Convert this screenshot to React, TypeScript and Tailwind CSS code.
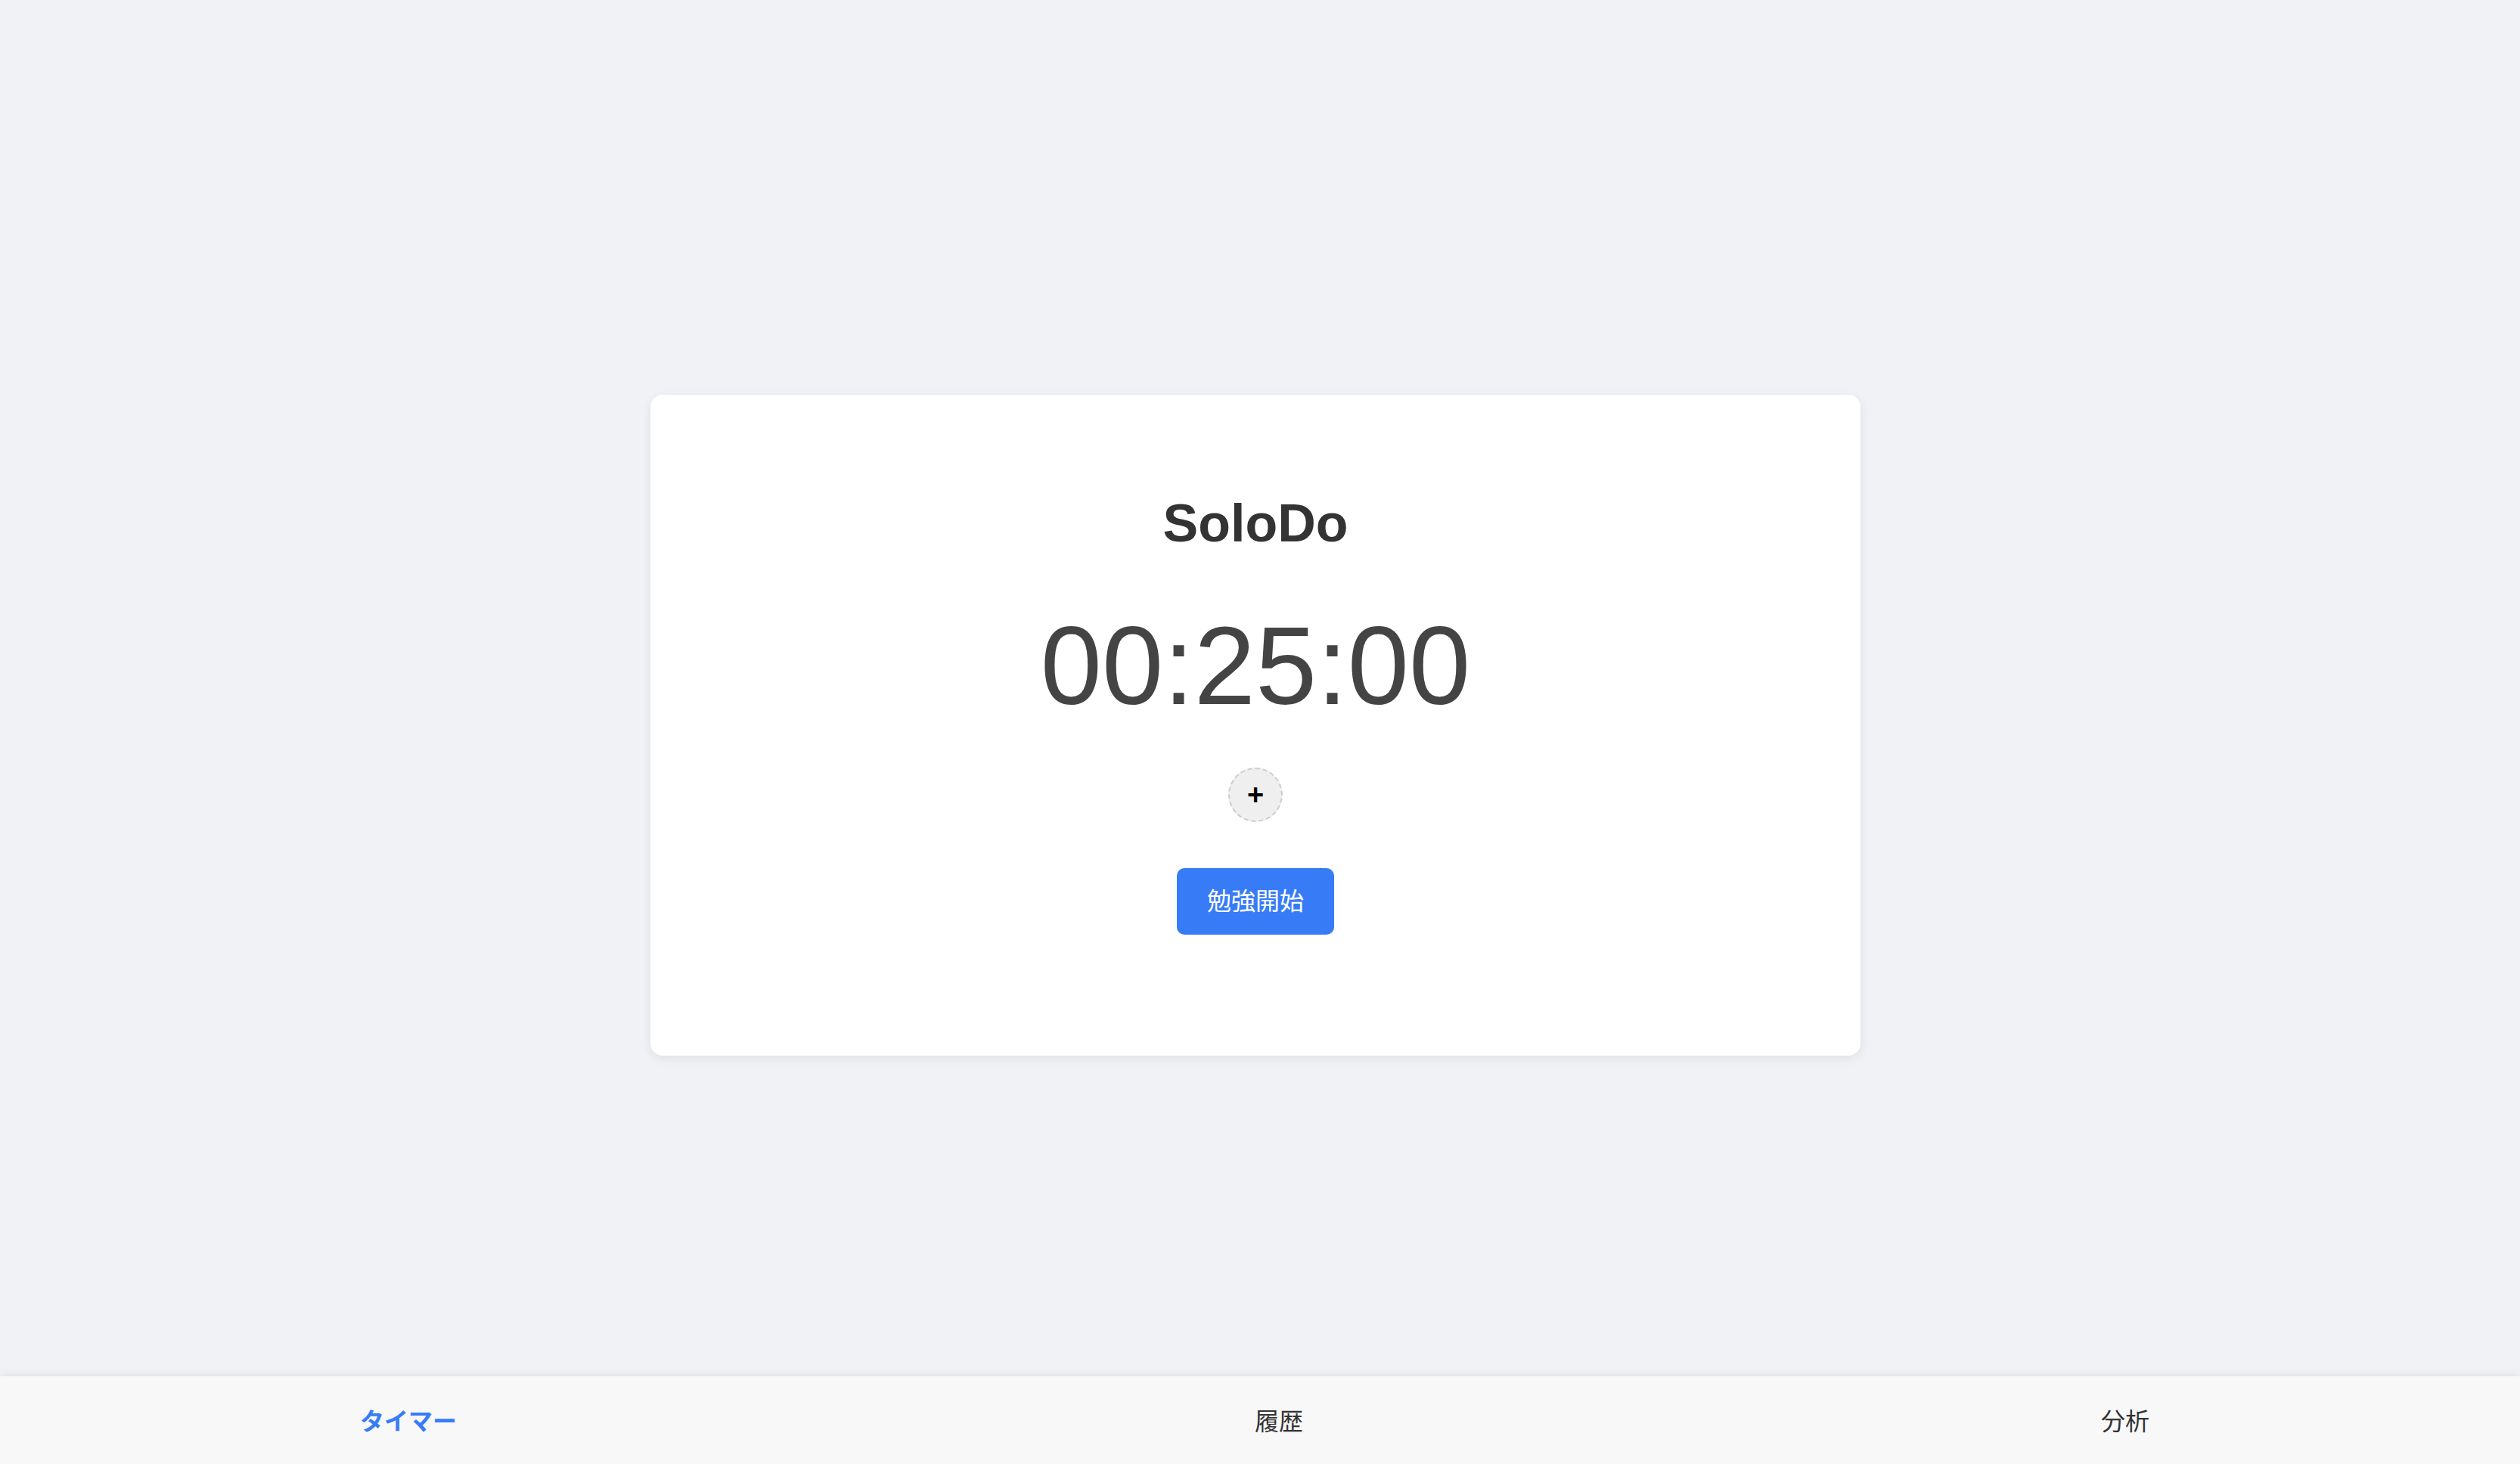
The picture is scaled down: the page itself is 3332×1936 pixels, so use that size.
import { useState } from "react";

const tabs = ["タイマー", "履歴", "分析"];

export default function App() {
  const [active, setActive] = useState(0);
  const [minutes] = useState(25);

  const time = `00:${String(minutes).padStart(2, "0")}:00`;

  return (
    <div
      className="flex h-screen flex-col bg-[#f0f2f5]"
      style={{ fontFamily: '"Liberation Sans", "Noto Sans CJK JP", sans-serif' }}
    >
      <main className="flex flex-1 justify-center pr-[12px] pt-[522px]">
        {/* タイマーカード */}
        <div className="flex h-fit w-[1600px] flex-col items-center rounded-[16px] bg-white pt-[80px] pb-[160px] shadow-[0_4px_14px_rgba(0,0,0,0.08)]">
          <h1 className="mt-[48px] text-[70px] leading-[84px] font-bold text-[#333]">
            SoloDo
          </h1>
          <div className="mt-[74px] text-[146px] leading-none text-[#444]">
            {time}
          </div>
          <button
            type="button"
            className="mt-[61px] flex h-[72px] w-[72px] items-center justify-center rounded-full border-2 border-dashed border-[#cccccc] bg-[#efefef] text-[38px] leading-none font-bold text-black"
            aria-label="追加"
          >
            +
          </button>
          <button
            type="button"
            className="mt-[61px] h-[88px] rounded-[10px] bg-[#377cf6] px-[40px] text-[32px] text-white"
          >
            勉強開始
          </button>
        </div>
      </main>

      {/* 下部ナビ */}
      <nav className="flex h-[116px] items-center justify-between bg-[#f8f8f8] pt-[4px] pl-[476px] pr-[490px] shadow-[0_-4px_10px_rgba(0,0,0,0.06)]">
        {tabs.map((t, i) => (
          <button
            key={t}
            type="button"
            onClick={() => setActive(i)}
            className={
              i === active
                ? "text-[32px] font-bold text-[#377cf6]"
                : "text-[32px] text-[#333]"
            }
          >
            {t}
          </button>
        ))}
      </nav>
    </div>
  );
}
